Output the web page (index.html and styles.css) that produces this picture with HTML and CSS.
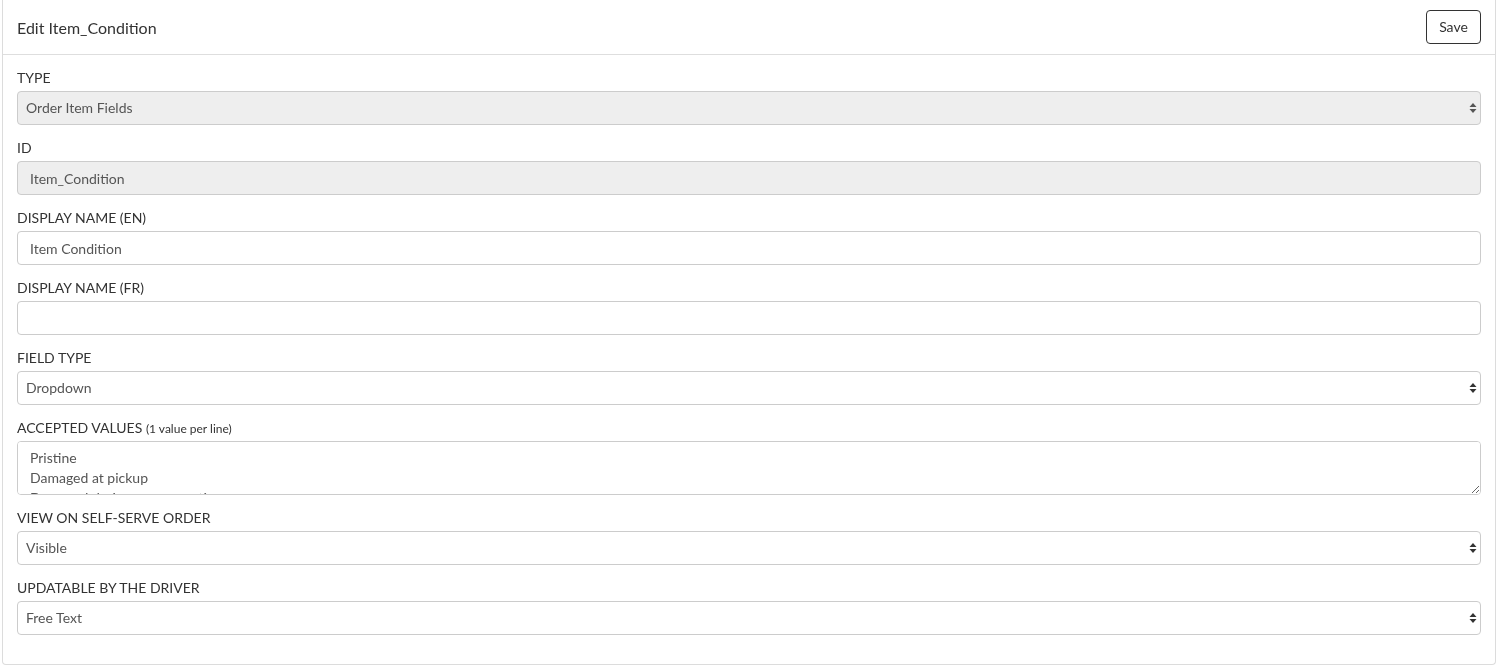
FILE: index.html
```html
<!DOCTYPE html>
<html>
<head>
<meta charset="utf-8">
<link rel="stylesheet" href="styles.css">
</head>
<body>
<div class="page">
  <div class="card">
    <div class="card-header">
      <div class="title">Edit Item_Condition</div>
      <button class="btn">Save</button>
    </div>
    <div class="card-body">
      <div class="group">
        <label class="lbl">TYPE</label>
        <div class="select-wrap">
          <select class="control select disabled" disabled><option>Order Item Fields</option></select>
          <svg class="arrows" width="8" height="12" viewBox="0 0 8 12"><path d="M4 1 L7.5 5 L0.5 5 Z M4 11 L0.5 7 L7.5 7 Z" fill="#555"/></svg>
        </div>
      </div>
      <div class="group">
        <label class="lbl">ID</label>
        <input class="control input disabled" value="Item_Condition" disabled>
      </div>
      <div class="group">
        <label class="lbl">DISPLAY NAME (EN)</label>
        <input class="control input" value="Item Condition">
      </div>
      <div class="group">
        <label class="lbl">DISPLAY NAME (FR)</label>
        <input class="control input" value="">
      </div>
      <div class="group">
        <label class="lbl">FIELD TYPE</label>
        <div class="select-wrap">
          <select class="control select"><option>Dropdown</option></select>
          <svg class="arrows" width="8" height="12" viewBox="0 0 8 12"><path d="M4 1 L7.5 5 L0.5 5 Z M4 11 L0.5 7 L7.5 7 Z" fill="#333"/></svg>
        </div>
      </div>
      <div class="group">
        <label class="lbl">ACCEPTED VALUES <span class="hint">(1 value per line)</span></label>
        <textarea class="control textarea">Pristine
Damaged at pickup
Damaged during transportation</textarea>
      </div>
      <div class="group">
        <label class="lbl">VIEW ON SELF-SERVE ORDER</label>
        <div class="select-wrap">
          <select class="control select"><option>Visible</option></select>
          <svg class="arrows" width="8" height="12" viewBox="0 0 8 12"><path d="M4 1 L7.5 5 L0.5 5 Z M4 11 L0.5 7 L7.5 7 Z" fill="#333"/></svg>
        </div>
      </div>
      <div class="group">
        <label class="lbl">UPDATABLE BY THE DRIVER</label>
        <div class="select-wrap">
          <select class="control select"><option>Free Text</option></select>
          <svg class="arrows" width="8" height="12" viewBox="0 0 8 12"><path d="M4 1 L7.5 5 L0.5 5 Z M4 11 L0.5 7 L7.5 7 Z" fill="#333"/></svg>
        </div>
      </div>
    </div>
  </div>
</div>
</body>
</html>
```
FILE: styles.css
```css
* { box-sizing: border-box; }
html, body { margin: 0; padding: 0; background: #fff; }
body {
  font-family: Lato, "Open Sans", "Liberation Sans", sans-serif;
  font-size: 14px;
  color: #333;
}
.page { padding: 0 2px 2px 2px; }
.card {
  border: 1px solid #dcdcdc;
  border-top: none;
  border-radius: 0 0 4px 4px;
  background: #fff;
}
.card-header {
  height: 55px;
  padding: 0 14px;
  border-bottom: 1px solid #dedede;
  display: flex;
  align-items: center;
  justify-content: space-between;
}
.title { font-size: 16px; color: #333; padding-top: 1px; }
.btn {
  font-family: inherit;
  font-size: 14px;
  color: #333;
  background: #fff;
  border: 1px solid #333;
  border-radius: 4px;
  height: 34px;
  width: 55px;
  padding: 0;
  margin-top: -1px;
}
.card-body { padding: 12px 14px 29px 14px; }
.group { margin-bottom: 12px; }
.group:last-child { margin-bottom: 0; }
.lbl {
  display: block;
  line-height: 20px;
  padding-top: 1px;
  margin-bottom: 3px;
  color: #333;
}
.hint { font-size: 12px; line-height: 0; }
.control {
  display: block;
  width: 100%;
  height: 34px;
  font-family: inherit;
  font-size: 14px;
  color: #555;
  background: #fff;
  border: 1px solid #ccc;
  border-radius: 4px;
  outline: none;
}
.input { padding: 0 12px; }
.select {
  -webkit-appearance: none;
  appearance: none;
  padding: 0 8px 2px 8px;
}
.disabled { background: #eee; opacity: 1; color: #555; }
.select-wrap { position: relative; }
.arrows {
  position: absolute;
  right: 4px;
  top: 11px;
  pointer-events: none;
}
.textarea {
  height: 54px;
  padding: 6px 12px;
  line-height: 20px;
  resize: vertical;
}
```
